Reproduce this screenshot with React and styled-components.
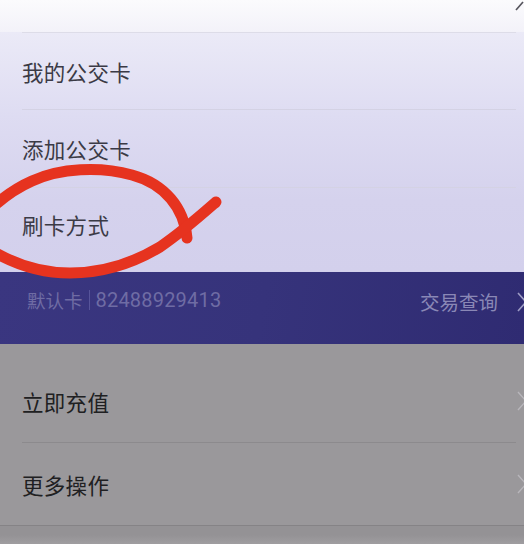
import React from "react";
import styled, { createGlobalStyle } from "styled-components";

const Global = createGlobalStyle`
  html, body { margin: 0; padding: 0; background: #a19fa2; }
  body { font-family: "Noto Sans CJK SC", "Noto Sans", sans-serif; }
`;

const Page = styled.div`
  position: relative;
  width: 524px;
  height: 544px;
  overflow: hidden;
  display: flex;
  flex-direction: column;
`;

const TopStrip = styled.div`
  height: 32px;
  flex: none;
  background: linear-gradient(180deg, #fbfbfd 0%, #f3f2f9 100%);
  position: relative;
`;

const Line = styled.div`
  height: 1px;
  margin-left: ${(p) => (p.$full ? 0 : 22)}px;
  margin-right: ${(p) => (p.$full ? 0 : 8)}px;
  background: ${(p) => p.$color || "#d4d2e4"};
`;

const Menu = styled.div`
  background: linear-gradient(180deg, #ebeaf7 0%, #dedcf2 35%, #d5d2ed 70%, #d3d0ec 100%);
  display: flex;
  flex-direction: column;
`;

const Row = styled.div`
  height: ${(p) => p.$h}px;
  display: flex;
  align-items: center;
  justify-content: space-between;
  padding-left: 22px;
  padding-bottom: ${(p) => p.$pb || 0}px;
  box-sizing: border-box;
  font-size: 21.5px;
  letter-spacing: 0.3px;
  color: ${(p) => (p.$dim ? "#202022" : "#3b3a45")};
`;

const Band = styled.div`
  height: 72px;
  flex: none;
  background: linear-gradient(100deg, #3a3680 0%, #36337b 50%, #2f2b72 100%);
  display: flex;
  justify-content: space-between;
  align-items: flex-start;
  padding: 15px 0 0 27px;
  box-sizing: border-box;
  font-size: 18.5px;
  color: #6f6ca4;
`;

const CardNo = styled.div`
  display: flex;
  align-items: center;
  gap: 6px;
`;

const Digits = styled.span`
  font-family: Roboto, "Noto Sans", sans-serif;
  font-size: 20px;
  letter-spacing: 0.2px;
`;

const Bar = styled.span`
  width: 1px;
  height: 20px;
  background: #57549a;
`;

const Query = styled.div`
  display: flex;
  align-items: center;
  gap: 18px;
  font-size: 19.5px;
  color: #8a88b6;
`;

const Dim = styled.div`
  flex: 1;
  background: #9a989b;
  display: flex;
  flex-direction: column;
  padding-top: 16px;
`;

const Foot = styled.div`
  flex: 1;
  background: linear-gradient(180deg, #949295 0%, #949295 50%, #9f9da0 100%);
`;

const Chevron = ({ color = "#b8b6bb", w = 1.4 }) => (
  <svg width="12" height="22" viewBox="0 0 12 22" style={{ marginRight: -4 }}>
    <path d="M2 2 L10 11 L2 20" fill="none" stroke={color} strokeWidth={w} />
  </svg>
);

const Corner = styled.svg`
  position: absolute;
  right: 0;
  top: 0;
`;

const Scribble = styled.svg`
  position: absolute;
  left: 0;
  top: 0;
  pointer-events: none;
`;

export default function App() {
  return (
    <Page>
      <Global />
      <TopStrip>
        <Corner width="12" height="14" viewBox="0 0 12 14">
          <path d="M4 10 L11 2" stroke="#55545c" strokeWidth="1.6" fill="none" />
        </Corner>
      </TopStrip>
      <Menu>
        <Line $color="#dddce8" />
        <Row $h={76}>我的公交卡</Row>
        <Line />
        <Row $h={77}>添加公交卡</Row>
        <Line />
        <Row $h={84} $pb={11}>刷卡方式</Row>
      </Menu>
      <Band>
        <CardNo>
          默认卡<Bar /><Digits>82488929413</Digits>
        </CardNo>
        <Query>
          交易查询
          <Chevron color="#9d9bc4" w={1.6} />
        </Query>
      </Band>
      <Dim>
        <Row $h={82} $dim>
          立即充值
          <Chevron />
        </Row>
        <Line $color="#8c8a8d" />
        <Row $h={82} $dim>
          更多操作
          <Chevron />
        </Row>
        <Line $full $color="#858386" />
        <Foot />
      </Dim>
      <Scribble width="524" height="544" viewBox="0 0 524 544">
        <path
          d="M187 238 C184 208 165 184 132 175 C100 166 60 168 32 181 C14 189 4 197 -6 206"
          fill="none"
          stroke="#e6331f"
          strokeWidth="11"
          strokeLinecap="round"
        />
        <path
          d="M216 202 C200 216 182 232 160 247 C130 265 100 273 70 273 C40 273 15 264 -6 252"
          fill="none"
          stroke="#e6331f"
          strokeWidth="11"
          strokeLinecap="round"
        />
      </Scribble>
    </Page>
  );
}
